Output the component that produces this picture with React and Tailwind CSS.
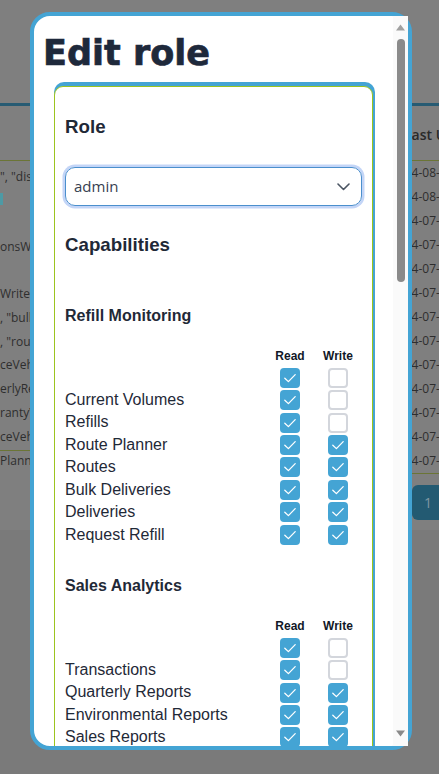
import React from "react";

const Box = ({ on }) =>
  on ? (
    <span className="flex h-[20px] w-[20px] items-center justify-center rounded-[4px] bg-[#44a4d4]">
      <svg width="20" height="20" viewBox="0 0 20 20" fill="none">
        <path d="M4.8 10.2 L8.4 13.6 L15.2 6.6" stroke="#ffffff" strokeWidth="1.3" strokeLinecap="round" strokeLinejoin="round" />
      </svg>
    </span>
  ) : (
    <span className="block h-[20px] w-[20px] rounded-[4px] border-2 border-[#d3d6dc] bg-white" />
  );

const Section = ({ title, rows, top, head }) => (
  <div>
    <h3 className={`${top} text-[16px] leading-[24px] font-bold text-[#1f2937]`}>{title}</h3>
    <div className={`${head} grid grid-cols-[1fr_48px_48px] text-[12px] leading-[16px] font-bold text-[#111827]`}>
      <span />
      <span className="text-center">Read</span>
      <span className="text-center">Write</span>
    </div>
    <div className="mt-[2.5px] flex flex-col">
      {rows.map((r, i) => (
        <div key={i} className="grid h-[22.45px] grid-cols-[1fr_48px_48px] items-center">
          <span className="whitespace-nowrap text-[16px] leading-[22.45px] text-[#1f2937]">{r[0]}</span>
          <span className="flex justify-center"><Box on={r[1]} /></span>
          <span className="flex justify-center"><Box on={r[2]} /></span>
        </div>
      ))}
    </div>
  </div>
);

const refill = [
  ["", true, false],
  ["Current Volumes", true, false],
  ["Refills", true, false],
  ["Route Planner", true, true],
  ["Routes", true, true],
  ["Bulk Deliveries", true, true],
  ["Deliveries", true, true],
  ["Request Refill", true, true],
];

const sales = [
  ["", true, false],
  ["Transactions", true, false],
  ["Quarterly Reports", true, true],
  ["Environmental Reports", true, true],
  ["Sales Reports", true, true],
  ["Warranty Reports", true, true],
  ["Service Vehicles", true, true],
];

const leftRows = ["Write\", \"dispatch", ", \"bulkDeliveries", ", \"routes", "ceVehicles", "erlyReports", "rantyVehicles", "ceVehicles", "Planner"];

const dates = ["2024-08-05", "2024-08-02", "2024-07-30", "2024-07-29", "2024-07-26", "2024-07-25", "2024-07-24", "2024-07-22", "2024-07-19", "2024-07-18", "2024-07-17", "2024-07-15", "2024-07-12"];

export default function App() {
  return (
    <div className="relative h-[774px] w-[439px] overflow-hidden bg-[#7a7a7a] font-['Liberation_Sans',Arial,sans-serif]">
      {/* background page (under dim overlay) */}
      <div className="flex h-[530px] flex-col bg-[#7f7f7f] font-['Open_Sans',sans-serif] text-[12px] text-[#2e2e2e]">
        <div className="h-[103px] shrink-0" />
        <div className="h-[3px] shrink-0 bg-[#275b73]" />
        <div className="flex flex-1">
          <div className="w-[40px] overflow-hidden">
            <div className="mt-[54px] h-px bg-[#6b7536]" />
            <div className="mt-[4px] h-[24px] whitespace-nowrap leading-[24px]">", "dispatch</div>
            <div className="mt-[4px] h-[12px] w-[3px] bg-[#4d9aa5]" />
            <div className="mt-[30px] h-[24px] whitespace-nowrap leading-[24px]">onsWrite</div>
            <div className="mt-[23px] flex flex-col">
              {leftRows.map((t, i) => (
                <div key={i} className="h-[23.8px] whitespace-nowrap leading-[23.8px]">{t}</div>
              ))}
            </div>
            <div className="mt-[-22px] h-px bg-[#6b7536]" />
          </div>
          <div className="flex-1" />
          <div className="w-[48px] overflow-hidden">
            <div className="mt-[17px] h-[24px] whitespace-nowrap pl-[13px] text-[14px] leading-[24px] font-semibold text-[#2a2a2a]">Last Updated</div>
            <div className="mt-[13px] h-px bg-[#6b7536]" />
            {dates.map((d) => (
              <div key={d} className="h-[24px] whitespace-nowrap leading-[24px]">{d}</div>
            ))}
            <div className="h-px bg-[#6b7536]" />
            <div className="ml-[21px] mt-[11px] flex h-[35px] w-[40px] items-center rounded-l-[6px] bg-[#235a72] pl-[12px] text-[14px] text-[#7f97a2]">1</div>
          </div>
        </div>
      </div>

      {/* modal */}
      <div className="absolute left-[30px] top-[12px] flex h-[738px] w-[382px] rounded-[20px] border-4 border-[#44a4d4] bg-white">
        <div className="min-w-0 flex-1 overflow-hidden pl-[9px] pt-[17px]">
          <h1 className="font-['DejaVu_Sans',sans-serif] text-[35px] leading-[40px] font-bold text-[#1e293b] [-webkit-text-stroke:0.7px_#1e293b]">Edit role</h1>
          <div className="ml-[11px] mt-[9px] w-[321px] rounded-[10px] bg-[#44a4d4] pr-[2px] pt-[4px]">
            <div className="rounded-[9px] border border-[#9cc41f] bg-white px-[10px] pb-[30px] pt-[28px]">
              <h2 className="text-[18.72px] leading-[24px] font-bold text-[#1f2937]">Role</h2>
              <div className="mt-[28px] flex h-[39px] items-center justify-between rounded-[10px] border border-[#4b8fcd] pl-[8px] pr-[11px] shadow-[0_0_0_2.5px_#c3d5f7]">
                <span className="font-['Open_Sans',sans-serif] text-[15px] text-[#374151]">admin</span>
                <svg width="13" height="8" viewBox="0 0 13 8" fill="none">
                  <path d="M1 1 L6.5 6.5 L12 1" stroke="#4b5563" strokeWidth="1.6" strokeLinecap="round" strokeLinejoin="round" />
                </svg>
              </div>
              <h2 className="mt-[26.6px] text-[18.72px] leading-[24px] font-bold text-[#1f2937]">Capabilities</h2>
              <Section title="Refill Monitoring" rows={refill} top="mt-[47.4px]" head="mt-[20px]" />
              <Section title="Sales Analytics" rows={sales} top="mt-[28.5px]" head="mt-[19.5px]" />
            </div>
          </div>
        </div>
        {/* scrollbar */}
        <div className="flex w-[15px] shrink-0 flex-col items-center bg-[#fafafa]">
          <svg className="mt-[8px]" width="9" height="7" viewBox="0 0 9 7">
            <path d="M4.5 0.5 L9 6.5 L0 6.5 Z" fill="#a0a0a0" />
          </svg>
          <div className="mt-[8px] h-[243px] w-[8px] rounded-full bg-[#8a8a8a]" />
          <div className="flex-1" />
          <svg className="mb-[9px]" width="9" height="7" viewBox="0 0 9 7">
            <path d="M0 0.5 L9 0.5 L4.5 6.5 Z" fill="#8a8a8a" />
          </svg>
        </div>
      </div>
    </div>
  );
}
